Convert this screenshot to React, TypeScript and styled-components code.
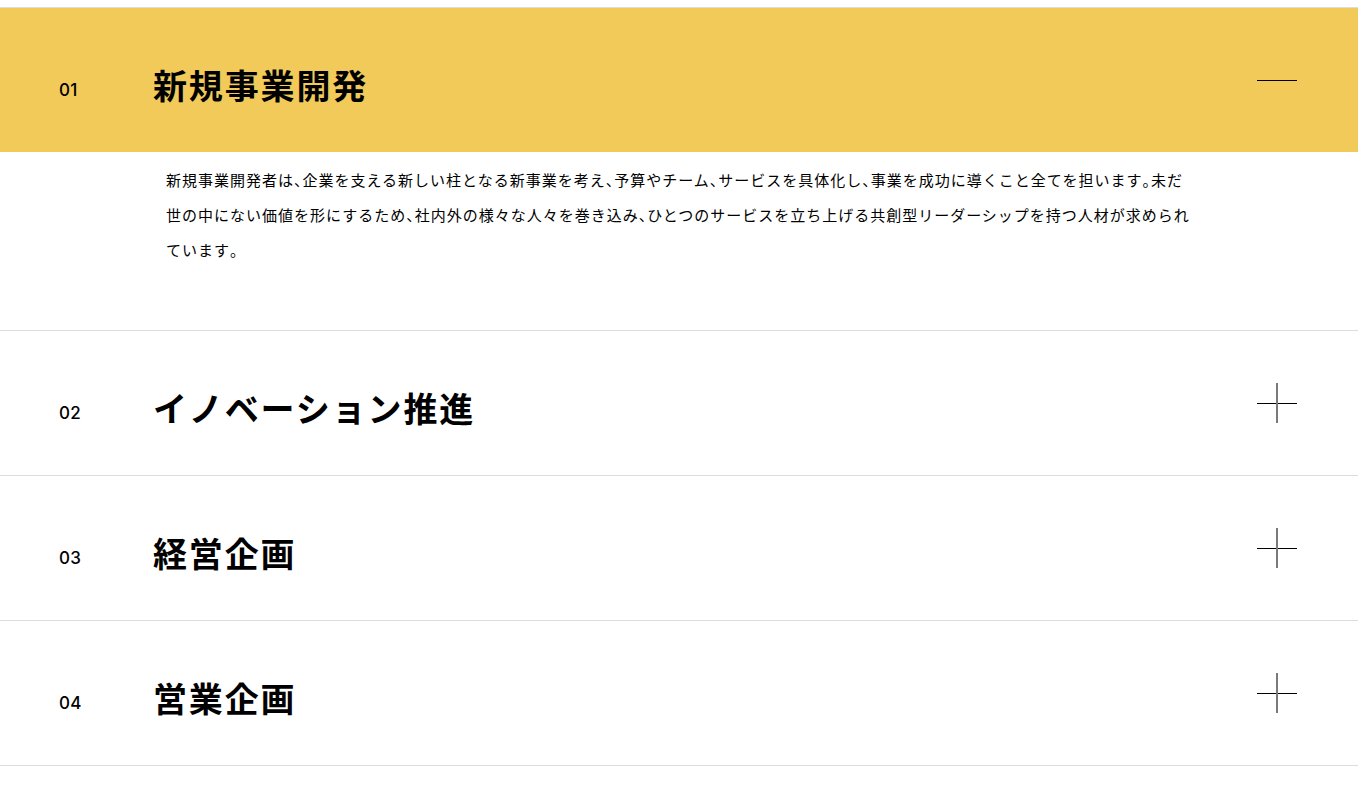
import React, { useState } from "react";
import styled, { createGlobalStyle } from "styled-components";

const GlobalStyle = createGlobalStyle`
  html, body {
    margin: 0;
    padding: 0;
    background: #fff;
  }
  body {
    font-family: "Noto Sans CJK JP", "Noto Sans", sans-serif;
    color: #000;
  }
`;

const items = [
  {
    no: "01",
    title: "新規事業開発",
    body: "新規事業開発者は、企業を支える新しい柱となる新事業を考え、予算やチーム、サービスを具体化し、事業を成功に導くこと全てを担います。未だ世の中にない価値を形にするため、社内外の様々な人々を巻き込み、ひとつのサービスを立ち上げる共創型リーダーシップを持つ人材が求められています。",
  },
  { no: "02", title: "イノベーション推進", body: "" },
  { no: "03", title: "経営企画", body: "" },
  { no: "04", title: "営業企画", body: "" },
];

const List = styled.ul`
  list-style: none;
  margin: 0;
  padding: 7px 0 0;
`;

const Item = styled.li`
  border-top: 1px solid #dcdcdc;
  &:last-child {
    border-bottom: 1px solid #dcdcdc;
  }
`;

const Header = styled.button<{ $open: boolean }>`
  display: flex;
  align-items: center;
  width: 100%;
  height: 144px;
  padding: 0 61px 0 59px;
  border: 0;
  background: ${(p) => (p.$open ? "#f1ca5a" : "#fff")};
  cursor: pointer;
  text-align: left;
  font: inherit;
  color: inherit;
`;

const Num = styled.span`
  width: 94px;
  flex-shrink: 0;
  padding-top: 19px;
  font-family: Inter, "Open Sans", sans-serif;
  font-size: 17px;
  font-weight: 500;
  letter-spacing: 0.02em;
`;

const Title = styled.h3`
  flex: 1;
  margin: 0;
  padding-top: 10px;
  font-size: 34px;
  font-weight: 700;
  letter-spacing: 0.055em;
  line-height: 1.4;
`;

const Toggle = styled.span<{ $open: boolean }>`
  position: relative;
  width: 40px;
  height: 40px;
  flex-shrink: 0;

  &::before {
    content: "";
    position: absolute;
    left: 0;
    top: 20px;
    width: 40px;
    height: 1px;
    background: #000;
  }

  &::after {
    content: "";
    display: ${(p) => (p.$open ? "none" : "block")};
    position: absolute;
    left: 19px;
    top: 0;
    width: 2px;
    height: 40px;
    background: #7a7a7a;
  }
`;

const Body = styled.div`
  padding: 10px 0 63px 166px;
`;

const Text = styled.p`
  margin: 0;
  max-width: 1030px;
  font-size: 15px;
  line-height: 35px;
  letter-spacing: 1px;
`;

// 句読点は半角幅で組む
const Punct = styled.span`
  font-feature-settings: "halt";
`;

const renderText = (s: string) =>
  s.split(/([、。])/).map((part, i) =>
    part === "、" || part === "。" ? <Punct key={i}>{part}</Punct> : part
  );

export default function App() {
  const [open, setOpen] = useState(0);
  return (
    <>
      <GlobalStyle />
      <List>
        {items.map((it, i) => (
          <Item key={it.no}>
            <Header $open={open === i} onClick={() => setOpen(open === i ? -1 : i)}>
              <Num>{it.no}</Num>
              <Title>{it.title}</Title>
              <Toggle $open={open === i} />
            </Header>
            {open === i && it.body && (
              <Body>
                <Text>{renderText(it.body)}</Text>
              </Body>
            )}
          </Item>
        ))}
      </List>
    </>
  );
}
